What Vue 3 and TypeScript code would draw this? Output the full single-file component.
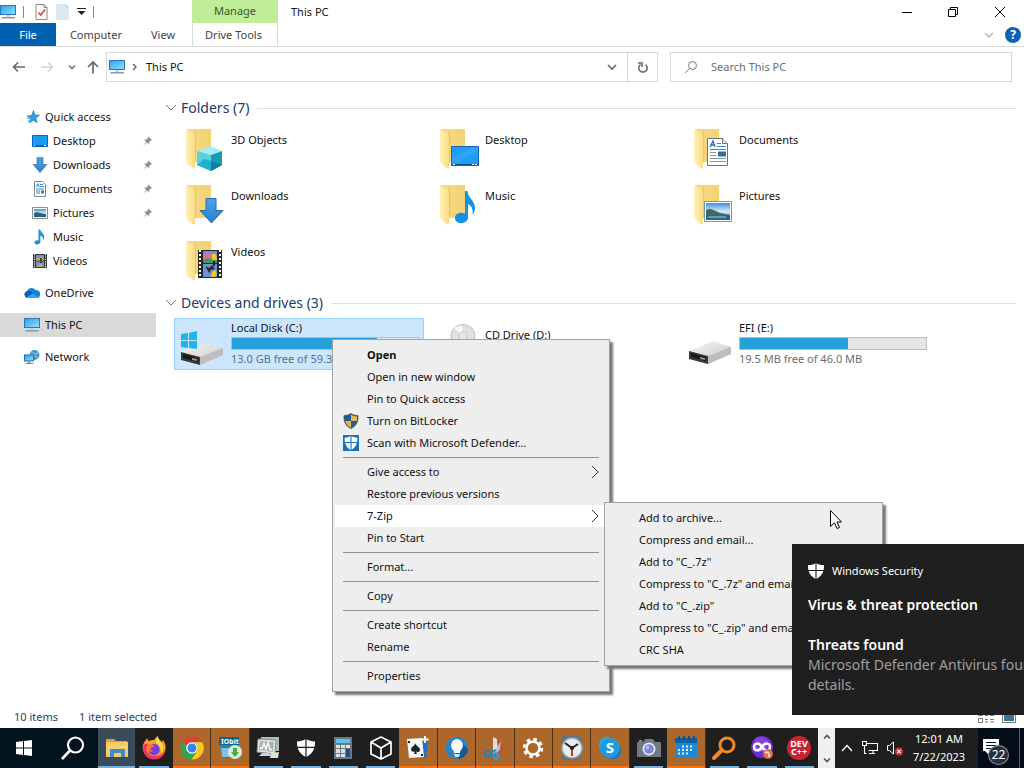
<script setup lang="ts">
import { ref } from 'vue'

interface NavItem { label: string; icon: string; child?: boolean; pinned?: boolean }
interface Drive { name: string; icon: string; used?: number; info?: string; selected?: boolean }
interface MenuEntry { label?: string; icon?: string; sub?: boolean; bold?: boolean; active?: boolean }
interface Mark { text: string; y: number; size: number }
interface TaskItem { label: string; icon: string; alert?: boolean; active?: boolean; marks?: Mark[] }

const search = ref('')

const navGroups: NavItem[][] = [
  [
    { label: 'Quick access', icon: 'star' },
    { label: 'Desktop', icon: 'desktop', child: true, pinned: true },
    { label: 'Downloads', icon: 'down', child: true, pinned: true },
    { label: 'Documents', icon: 'doc', child: true, pinned: true },
    { label: 'Pictures', icon: 'pic', child: true, pinned: true },
    { label: 'Music', icon: 'note', child: true },
    { label: 'Videos', icon: 'film', child: true },
  ],
  [{ label: 'OneDrive', icon: 'cloud' }],
  [{ label: 'This PC', icon: 'pc' }],
  [{ label: 'Network', icon: 'network' }],
]

const folders = [
  { name: '3D Objects', icon: 'f-3d' },
  { name: 'Desktop', icon: 'f-desktop' },
  { name: 'Documents', icon: 'f-doc' },
  { name: 'Downloads', icon: 'f-down' },
  { name: 'Music', icon: 'f-music' },
  { name: 'Pictures', icon: 'f-pic' },
  { name: 'Videos', icon: 'f-video' },
]

const drives: Drive[] = [
  { name: 'Local Disk (C:)', icon: 'drive-win', used: 78, info: '13.0 GB free of 59.3 GB', selected: true },
  { name: 'CD Drive (D:)', icon: 'cd' },
  { name: 'EFI (E:)', icon: 'drive', used: 58, info: '19.5 MB free of 46.0 MB' },
]

const menuGroups: MenuEntry[][] = [
  [
    { label: 'Open', bold: true },
    { label: 'Open in new window' },
    { label: 'Pin to Quick access' },
    { label: 'Turn on BitLocker', icon: 'uac' },
    { label: 'Scan with Microsoft Defender...', icon: 'defender' },
  ],
  [
    { label: 'Give access to', sub: true },
    { label: 'Restore previous versions' },
    { label: '7-Zip', sub: true, active: true },
    { label: 'Pin to Start' },
  ],
  [{ label: 'Format...' }],
  [{ label: 'Copy' }],
  [{ label: 'Create shortcut' }, { label: 'Rename' }],
  [{ label: 'Properties' }],
]

const subMenu = [
  'Add to archive...',
  'Compress and email...',
  'Add to "C_.7z"',
  'Compress to "C_.7z" and email',
  'Add to "C_.zip"',
  'Compress to "C_.zip" and email',
  'CRC SHA',
]

const tasks: TaskItem[] = [
  { label: 'File Explorer', icon: 't-explorer', active: true },
  { label: 'Firefox', icon: 't-firefox' },
  { label: 'Chrome', icon: 't-chrome', alert: true },
  { label: 'Uninstaller', icon: 't-iobit', alert: true, marks: [{ text: 'IObit', y: 8, size: 7 }] },
  { label: 'Performance', icon: 't-monitor' },
  { label: 'Security', icon: 'shield' },
  { label: 'Calculator', icon: 't-calc' },
  { label: '3D Viewer', icon: 't-cube' },
  { label: 'Solitaire', icon: 't-cards', alert: true },
  { label: 'Tips', icon: 't-bulb', alert: true },
  { label: 'Snipping Tool', icon: 't-snip', alert: true },
  { label: 'Settings', icon: 't-gear', alert: true },
  { label: 'Clock', icon: 't-clock', alert: true },
  { label: 'Skype', icon: 't-skype', alert: true, marks: [{ text: 'S', y: 17, size: 15 }] },
  { label: 'Camera', icon: 't-camera' },
  { label: 'Calendar', icon: 't-calendar', alert: true },
  { label: 'Everything', icon: 't-search' },
  { label: 'Mixed Reality', icon: 't-loop' },
  { label: 'Dev-C++', icon: 't-dev', marks: [{ text: 'DEV', y: 11, size: 9 }, { text: 'C++', y: 19, size: 9 }] },
]
</script>

<template>
  <div class="screen">
    <svg class="sprite" aria-hidden="true">
      <defs>
        <linearGradient id="gBlue" x1="0" y1="0" x2="1" y2="1"><stop offset="0" stop-color="#2fa4ec" /><stop offset="1" stop-color="#8fdcff" /></linearGradient>
        <linearGradient id="gFold" x1="0" y1="0" x2="1" y2="0"><stop offset="0" stop-color="#f8da85" /><stop offset="1" stop-color="#f2d272" /></linearGradient>
        <linearGradient id="gFlap" x1="0" y1="0" x2="1" y2="0"><stop offset="0" stop-color="#fff0b8" /><stop offset="1" stop-color="#fbdc83" /></linearGradient>
        <linearGradient id="gArrow" x1="0" y1="0" x2="0" y2="1"><stop offset="0" stop-color="#4ba4e8" /><stop offset="1" stop-color="#2a80cf" /></linearGradient>
        <linearGradient id="gSky" x1="0" y1="0" x2="0" y2="1"><stop offset="0" stop-color="#3f8fd8" /><stop offset="0.5" stop-color="#d4ecfa" /><stop offset="1" stop-color="#3c7baa" /></linearGradient>
        <linearGradient id="gDrive" x1="0" y1="0" x2="1" y2="1"><stop offset="0" stop-color="#f4f4f4" /><stop offset="1" stop-color="#c9c9c9" /></linearGradient>
      </defs>

      <symbol id="pc" viewBox="0 0 16 16">
        <path d="M0 1h16v10H0z" fill="#2878b4" /><path d="M1 2h14v8H1z" fill="url(#gBlue)" />
        <path d="M6 11h4v2H6z" fill="#c6d6e2" /><path d="M2 13h13v1.400H1z" fill="#7f9cb2" />
      </symbol>
      <symbol id="check" viewBox="0 0 12 16">
        <path d="M.5.5h8l3 3v12H.5z" fill="#fbfbfb" stroke="#8a8a8a" /><path d="M8.500.5v3h3" fill="none" stroke="#8a8a8a" />
        <path d="M3 8.500 5.200 11 9.500 5.500" fill="none" stroke="#e0523c" stroke-width="1.800" />
      </symbol>
      <symbol id="blank" viewBox="0 0 13 16"><path d="M0 0h10l3 3v13H0z" fill="#dce8f2" /><path d="M10 0v3h3" fill="none" stroke="#c4d2de" /></symbol>
      <symbol id="star" viewBox="0 0 16 16">
        <path d="M9.500 1.500 11 6l4.500.2-3.600 3 1.300 4.500-4-2.400L5.200 14l1.400-4.400L3 7l4.500-.5z" fill="#2f9de6" stroke="#1273b8" stroke-width=".6" />
        <path d="M3 9.500h4M3.500 12h2.500" stroke="#58b6f2" />
      </symbol>
      <symbol id="desktop" viewBox="0 0 16 16"><path d="M.5 2.500h15v11H.5z" fill="#1a9cf4" stroke="#0d68b4" /><path d="M1 12h14v1H1z" fill="#0a5ea8" /><path d="M2 12h1v1H2zM12 12h2v1h-2z" fill="#fff" /></symbol>
      <symbol id="down" viewBox="0 0 16 16"><path d="M5 .5h6v7h4L8 15.500 1 7.500h4z" fill="url(#gArrow)" stroke="#2b6ca8" stroke-width=".6" /></symbol>
      <symbol id="doc" viewBox="0 0 16 16">
        <path d="M2.500.5h8l3 3v12h-11z" fill="#fff" stroke="#7d8790" /><path d="m4.500 6 1.400-3.500L7.300 6M8 3.500h3M8 5.500h4M4 8h8M4 10h4M4 12h4" stroke="#3787c4" fill="none" /><path d="M9 9.500h3v3H9z" fill="#3a7fb8" />
      </symbol>
      <symbol id="pic" viewBox="0 0 16 16"><path d="M.5 2.500h15v11H.5z" fill="#fff" stroke="#848e98" /><path d="M2 4h12v8H2z" fill="url(#gSky)" /><path d="M2 8c4-2 6 1 12 1v3H2z" fill="#2d607c" /></symbol>
      <symbol id="note" viewBox="0 0 16 16"><path d="M6.500.5h1.700c.5 3.200 4.500 4 4 8-.2 1.500-.8 2.200-1.300 2.800.6-3-.9-4.300-2.500-4.800v6.200c0 3.300-6 3.700-6 .8 0-2 2.300-2.600 4.100-2z" fill="#1b92d8" /></symbol>
      <symbol id="film" viewBox="0 0 16 16">
        <path d="M1 1h14v14H1z" fill="#333" /><path d="M2.500 1v14M13.500 1v14" stroke="#fff" stroke-width="1.200" stroke-dasharray="1.200 1.200" />
        <path d="M4 2h8v5.500H4zM4 8.500h8V14H4z" fill="#6d91df" /><path d="M4 6c2-2 3-1 4-1l1-2 2 1v3.500H4zM5 14c1-3 3-2 3-3l2-1v4z" fill="#d6ae32" /><path d="M8 5h2v5H8z" fill="#444" />
      </symbol>
      <symbol id="cloud" viewBox="0 0 16 16"><path d="M3.500 13A3.500 3.500 0 0 1 3 6.200 4.800 4.800 0 0 1 11.500 5 4 4 0 0 1 16 10c0 2-1.400 3-3 3z" fill="#1a83d8" /><path d="M3.500 13A3.500 3.500 0 0 1 3 6.200 5 5 0 0 1 7 6l5 6.800z" fill="#0b5fb5" /><path d="m2 12.500 7-4 5.500 4c-.5.400-1 .5-1.500.5H3.500z" fill="#2ba6ee" /></symbol>
      <symbol id="network" viewBox="0 0 16 16"><circle cx="10.500" cy="6" r="5" fill="#4b94c6" /><path d="M7 3c3 0 2 2 4 2s2-2 4-1M6 6c4 0 5 1 8 3" stroke="#9ccfe8" fill="none" /><path d="M0 5.500h10v7H0z" fill="#246fa8" /><path d="M1 6.500h8v5H1z" fill="url(#gBlue)" /><path d="M4 12.500h2v1.500H4zM1.500 14h8v1h-8z" fill="#7291a8" /></symbol>
      <symbol id="pin" viewBox="0 0 12 12"><path d="m7 1 4 4-1.300.4-2 2-.2 2.300L5.200 7.500 1 11.500l3.600-4.800L2.300 4.500l2.500-.2 2-2z" fill="#8a9299" /></symbol>

      <symbol id="folder" viewBox="0 0 48 48">
        <path d="M9 5h24v31l-2 2H13z" fill="url(#gFold)" /><path d="M18 7v31l-2 2V9z" fill="#dfb957" opacity=".6" />
        <path d="M8 5.500 17 10v32c0 2-1 3-2 2.500L8 38z" fill="url(#gFlap)" />
      </symbol>
      <symbol id="f-3d" viewBox="0 0 48 48"><use href="#folder" width="48" height="48" />
        <path d="m19 27 13-5 12 5-11 4z" fill="#a4eef2" /><path d="m19 27 14 4v16l-14-6z" fill="#5ccfe2" /><path d="m33 31 11-4v14l-11 6z" fill="#169ab6" /><path d="m19 41 7-6 7 2v10z" fill="#1fb0ca" /><path d="m33 37 11 4-11 6z" fill="#0c7f9c" />
      </symbol>
      <symbol id="f-desktop" viewBox="0 0 48 48"><use href="#folder" width="48" height="48" />
        <path d="M19.500 22.500h27v19h-27z" fill="#1f9cf6" stroke="#0f64ad" /><path d="M20 40h26v1H20z" fill="#0a5290" /><path d="M21 40h2v1h-2zM40 40h2v1h-2zM43 40h2v1h-2z" fill="#fff" /><path d="m20 34 22-11h4v4L22 40h-2z" fill="#42b2ff" opacity=".45" />
      </symbol>
      <symbol id="f-doc" viewBox="0 0 48 48"><use href="#folder" width="48" height="48" />
        <path d="M21.500 14.500h15l5 5v22h-20z" fill="#fff" stroke="#6d7680" /><path d="M36.500 14.500v5h5" fill="#dde3e8" stroke="#6d7680" />
        <path d="m24 23 3-6 2 6M25 21h4" fill="none" stroke="#2271b8" stroke-width="1.300" /><path d="M31 19.500h4M31 22.500h9M24 25.500h16" stroke="#2d8ac6" /><path d="M24 28.500h6M24 31.500h6M24 34.500h16M24 37.500h16" stroke="#88949e" /><path d="M32 27.500h8v5h-8z" fill="#2a6fa6" />
      </symbol>
      <symbol id="f-down" viewBox="0 0 48 48"><use href="#folder" width="48" height="48" />
        <path d="M28 18.500h10v12h7L33.500 43 22 30.500h6z" fill="url(#gArrow)" stroke="#2b6ca8" />
      </symbol>
      <symbol id="f-music" viewBox="0 0 48 48"><use href="#folder" width="48" height="48" />
        <path d="M33 11h2.500c0 7 7.500 9 7.500 17 0 4-1.500 5-2.500 7 1-6-1-9-4.500-11v13c0 8-13 8-13 1 0-5 6-6 10-4.500z" fill="#1492e2" />
      </symbol>
      <symbol id="f-pic" viewBox="0 0 48 48"><use href="#folder" width="48" height="48" />
        <path d="M18.500 21.500h27v20h-27z" fill="#fff" stroke="#7c93a8" /><path d="M20 23h24v17H20z" fill="url(#gSky)" /><path d="M20 30c5-3 9 1 14 3l10 2v2H20z" fill="#3b6d5c" /><path d="M20 35h24v5H20z" fill="#2d638f" /><path d="M22 37h18" stroke="#a9c9dc" />
      </symbol>
      <symbol id="f-video" viewBox="0 0 48 48"><use href="#folder" width="48" height="48" />
        <path d="M20 14h24v28H20z" fill="#262626" /><path d="M22 14v28M42 14v28" stroke="#fff" stroke-width="2" stroke-dasharray="2 2" />
        <path d="M25 15h14v12H25zM25 28h14v13H25z" fill="#6b90de" /><path d="M25 18h7l5-2 2 5-4 5H25z" fill="#dc6f9b" /><path d="M25 24c4-3 6 0 9-2l5 2v3H25z" fill="#449a53" />
        <path d="M34 18h4l1 6h-5zM34 36l3-2 2 4-2 3h-4z" fill="#f0c62b" /><path d="m27 30 4 2 3-3 3 4-4 1-2 3z" fill="#342b20" /><path d="M35 25h2v5h-2z" fill="#222" />
      </symbol>

      <symbol id="drive" viewBox="0 0 48 48">
        <g transform="translate(0 4)">
          <path d="m3 28 22-9q2-.6 4 0l16 5v7L22 41 3 36z" fill="url(#gDrive)" /><path d="m3 28 19 5v8L3 36z" fill="#3a3a3a" /><path d="m5 30 15 4v4L5 34z" fill="#191919" /><path d="m14 34 5 1v2l-5-1z" fill="#8d9b87" /><path d="m22 33 23-9v7L22 41z" fill="#bdbdbd" />
        </g>
      </symbol>
      <symbol id="drive-win" viewBox="0 0 48 48"><use href="#drive" y="1" width="48" height="48" />
        <path d="m3 15 7-1v7H3zM11 14l8-2v9h-8zM3 22h7v7l-7-1zM11 22h8v8l-8-1z" fill="#1eb4ee" />
      </symbol>
      <symbol id="cd" viewBox="0 0 48 48"><ellipse cx="31" cy="17" rx="12" ry="11.500" fill="#dfe1e3" stroke="#bcc0c4" /><path d="m31 17-9-8 8-3zM31 17l10 6-7 5z" fill="#f8f8f8" /><circle cx="31" cy="17" r="4" fill="#f4f4f4" stroke="#bdc1c4" /><circle cx="31" cy="17" r="1.500" fill="#fff" stroke="#aaa" stroke-width=".5" /></symbol>

      <symbol id="uac" viewBox="0 0 16 16"><path d="M8 .5C10 2 12.500 2.500 15 2.500c.5 6-2 11-7 13-5-2-7.500-7-7-13C3.500 2.500 6 2 8 .5z" fill="#25598f" /><path d="M8 1.500v6.500H2.300C1.900 6.500 1.800 5 1.900 3.500 4.500 3.300 6.500 2.800 8 1.500z" fill="#25598f" /><path d="M8 1.500c1.500 1.300 3.500 1.800 6.100 2 .1 1.500 0 3-.4 4.500H8zM8 8v6.700C5 13.500 3.200 11 2.300 8z" fill="#e4b94c" /><path d="M8 .5C10 2 12.500 2.500 15 2.500c.5 6-2 11-7 13-5-2-7.500-7-7-13C3.500 2.500 6 2 8 .5z" fill="none" stroke="#4c5358" stroke-width=".8" /></symbol>
      <symbol id="defender" viewBox="0 0 16 16"><path d="M0 0h16v16H0z" fill="#1873bd" /><path d="M8 1c2 1.200 4 1.600 6.300 1.700C14.700 8.200 12.500 13 8 15 3.500 13 1.300 8.200 1.700 2.700 4 2.600 6 2.200 8 1z" fill="#fff" /><path d="M8 1v14M1 7.500h14" stroke="#1873bd" stroke-width="1.100" /></symbol>
      <symbol id="shield" viewBox="0 0 16 16"><path d="M8 0c2.300 1.500 5 2.200 8 2.200C16.300 8.500 13.500 13.800 8 16 2.500 13.800-.3 8.500 0 2.200 3 2.200 5.700 1.500 8 0z" fill="#fff" /><path d="M8 0v16M0 7.500h16" stroke="#1f1f1f" stroke-width="1.100" /></symbol>

      <symbol id="t-explorer" viewBox="0 0 24 24"><path d="M1 3h8l2 2h11v6H1z" fill="#dfa132" /><path d="M1 6h22v15H1z" fill="#f8ca63" /><path d="M5 13h15v8h-4v-4H9v4H5z" fill="#3b8fce" /><path d="M1 10h22v2H1z" fill="#fbdc8e" opacity=".5" /></symbol>
      <symbol id="t-firefox" viewBox="0 0 24 24">
        <path d="M5 2c1 2 1 3 2 3 2-1 3-1 5-1 1-1 2-3 4-4 0 3 2 4 4 6l1-2c2 3 3 6 2.500 9A11.500 11.500 0 0 1 1 14C0 9 2 7 3 5c1-1 2-2 2-3z" fill="#ff9a24" /><path d="M1 12c0 6 4 11.500 11 11.500 6 0 10-3 11.500-9C20 20 10 22 6 17c-2-3-2-6 0-9-2-1-5 0-5 4z" fill="#f3335f" /><circle cx="12" cy="13.500" r="5.700" fill="#763ce0" /><path d="M6 8c3 0 4 1 6 1 1 1-1 2-3 3-1 2 1 3 3 3-3 2-7 0-7-3z" fill="#ff7526" /><path d="M16 0c-1 4 4 5 5 10 1 4-1 6-2 7 1-5-3-9-5-10 0-4 1-6 2-7z" fill="#ffdf43" />
      </symbol>
      <symbol id="t-chrome" viewBox="0 0 24 24"><circle cx="12" cy="12" r="11.500" fill="#31a552" /><path d="M2 6A11.500 11.500 0 0 1 22 6H12a6 6 0 0 0-5.200 3z" fill="#e53f33" /><path d="M2 6 7 15l5 3-4 5.500" fill="#31a552" /><path d="M12 6h10a11.500 11.500 0 0 1-10.500 17.500L17.200 15A6 6 0 0 0 12 6z" fill="#fcc81e" /><circle cx="12" cy="12" r="5.800" fill="#fff" /><circle cx="12" cy="12" r="4.500" fill="#3c80e8" /></symbol>
      <symbol id="t-iobit" viewBox="0 0 24 24"><path d="M1 1h20v21H4z" fill="#1d83b3" /><path d="M1 1h20v8H1z" fill="#116489" /><path d="M3 12h13v9H4z" fill="#79c5df" /><circle cx="17" cy="16" r="7" fill="#dce9dd" /><path d="M15 12h4v4h2l-4 5-4-5h2z" fill="#46af38" /></symbol>
      <symbol id="t-monitor" viewBox="0 0 24 24"><path d="M5 1h18v14H5z" fill="#aebbb7" /><path d="m2 3 18 1-1 14-18-2z" fill="#e2e8e4" stroke="#86928f" /><path d="m4 5 14 1-1 10-14-2z" fill="#a8b4ae" /><path d="m4 12 2 .5 2-5 2 6 2-7 2 7 2 .5" fill="none" stroke="#fff" stroke-width="1.300" /><path d="M3 20h13l-3-3H6z" fill="#ccd3d2" /><path d="m15 17 8-1-1 6h-8z" fill="#dce0df" /></symbol>
      <symbol id="t-calc" viewBox="0 0 24 24"><path d="M3 1h18v22H3z" fill="#6d7881" /><path d="M5 3h14v4H5z" fill="#5bc4f4" /><path d="M5 9h4v3H5zM10 9h4v3h-4zM15 9h4v3h-4zM5 13h4v4H5zM10 13h4v4h-4zM5 18h4v3H5zM10 18h4v3h-4z" fill="#dce2e6" /><path d="M15 13h4v8h-4z" fill="#1d4e83" /></symbol>
      <symbol id="t-cube" viewBox="0 0 24 24"><path d="m12 1 10 5v12l-10 5-10-5V6zM2 6l10 6 10-6M12 12v11" fill="none" stroke="#fff" stroke-width="1.700" stroke-linejoin="round" /></symbol>
      <symbol id="t-cards" viewBox="0 0 24 24"><path d="m14 4 8 1-2 17-9-1z" fill="#1a73cb" /><path d="m1 3 15-1 2 19-15 1z" fill="#f7faf9" /><path d="M9 7c1 3 5 4 5 7 0 2-3 3-4 1l1 3H8l1-3c-2 2-4 0-4-2 1-3 4-3 4-6z" fill="#18222e" /><path d="M2 5h2v2H2zM15 18h2v2h-2z" fill="#222" /><path d="M19 0v7M15.500 3.500h7" stroke="#fff" stroke-width="2" /></symbol>
      <symbol id="t-bulb" viewBox="0 0 24 24"><circle cx="12" cy="12" r="11" fill="#2487ce" /><path d="m17 7 6 6c0 5-4 9-9 10l-4-4z" fill="#105a9a" /><path d="M12 3a6.500 6.500 0 0 0-4 11c1 1 1 2 1 3h6c0-1 0-2 1-3a6.500 6.500 0 0 0-4-11z" fill="#fff" /><path d="M9 18h6l-1 3h-4z" fill="#cde9f7" /></symbol>
      <symbol id="t-snip" viewBox="0 0 24 24"><path d="M10 4a7 7 0 1 1 2 14" fill="none" stroke="#d53f2f" stroke-width="3" /><path d="m10 1 4 2 1 16-5-2z" fill="#dce0e1" /><path d="m13 13 5-8-1 9-4 3z" fill="#b8c4cc" /><circle cx="5" cy="18" r="3" fill="none" stroke="#217fbd" stroke-width="2" /><ellipse cx="13" cy="20" rx="2.500" ry="3" fill="none" stroke="#289fdc" stroke-width="2" /><path d="m7 17 6-3" stroke="#278bc7" stroke-width="2" /></symbol>
      <symbol id="t-gear" viewBox="0 0 24 24"><circle cx="12" cy="12" r="8.500" fill="none" stroke="#fff" stroke-width="3.500" stroke-dasharray="3.500 3.175" /><circle cx="12" cy="12" r="6.500" fill="none" stroke="#fff" stroke-width="2.500" /></symbol>
      <symbol id="t-clock" viewBox="0 0 24 24"><path d="M1 3a4 4 0 0 1 4-3h15l3 6-1 14-4 4H4l-3-5z" fill="#65717b" /><circle cx="12" cy="12" r="10" fill="#e9edef" stroke="#9dabb3" stroke-width="1.500" /><path d="m5 7 7 5 6-4" fill="none" stroke="#222" stroke-width="2" /><path d="M12 11v9" stroke="#d12e2e" stroke-width="2" /><circle cx="12" cy="12" r="2" fill="#222" /></symbol>
      <symbol id="t-skype" viewBox="0 0 24 24"><circle cx="9" cy="9" r="8" fill="#27aee8" /><circle cx="15" cy="15" r="8" fill="#1177c2" /><circle cx="12" cy="12" r="10" fill="#1b9cde" /></symbol>
      <symbol id="t-camera" viewBox="0 0 24 24"><path d="M0 6h6l2-3h8l2 3h6v15H0z" fill="#6f7a82" /><path d="M2 4h3v2H2z" fill="#849099" /><circle cx="12" cy="13" r="6.500" fill="#e9ecef" /><circle cx="12" cy="13" r="4.800" fill="#8583dc" /><circle cx="10.500" cy="11.500" r="1.700" fill="#b9bdf7" /></symbol>
      <symbol id="t-calendar" viewBox="0 0 24 24"><path d="M1 2h22v20H1z" fill="#1d89d3" /><path d="M1 2h22v5H1z" fill="#105fa6" /><path d="M5 0v4M10 0v4M15 0v4M20 0v4" stroke="#0a4984" stroke-width="1.500" /><path d="M8 10.500h12M4 14h16M4 17.500h12" stroke="#e7f6ff" stroke-width="2" stroke-dasharray="2 2" /></symbol>
      <symbol id="t-search" viewBox="0 0 24 24"><circle cx="15" cy="9" r="7" fill="none" stroke="#f18920" stroke-width="3" /><path d="m10 14-8 8" stroke="#f18920" stroke-width="4" stroke-linecap="round" /></symbol>
      <symbol id="t-loop" viewBox="0 0 24 24"><circle cx="12" cy="11" r="11" fill="#6d2ccc" /><path d="M5 3c5-4 12-1 14 3l-4 11-11-4z" fill="#8940e1" /><path d="M12 11C9 6 4 7 4 11s5 5 8 0c3-5 8-4 8 0s-5 5-8 0z" fill="none" stroke="#fff" stroke-width="2.500" /><circle cx="18" cy="18" r="5" fill="#e16b56" /><path d="M15 17c3-2 5 1 4 4" fill="none" stroke="#ffd3ad" stroke-width="2" /></symbol>
      <symbol id="t-dev" viewBox="0 0 24 24"><circle cx="12" cy="12" r="12" fill="#c82431" /></symbol>
    </svg>

    <header>
      <div class="titlebar">
        <div class="quick">
          <svg class="i16"><use href="#pc" /></svg>
          <i class="bar"></i>
          <svg class="qa"><use href="#check" /></svg>
          <svg class="qa"><use href="#blank" /></svg>
          <svg class="caret" viewBox="0 0 9 7"><path d="M0 .5h9" stroke="#222" /><path d="M.5 3h8l-4 4z" fill="#222" /></svg>
          <i class="bar"></i>
        </div>
        <div class="manage">Manage</div>
        <h1>This PC</h1>
        <div class="winbtns">
          <button aria-label="Minimize"><svg viewBox="0 0 12 12"><path d="M1 6.500h10" stroke="#000" /></svg></button>
          <button aria-label="Restore"><svg viewBox="0 0 12 12"><path d="M1.500 3.500h7v7h-7zM3.500 3.500v-2h7v7h-2" fill="none" stroke="#000" /></svg></button>
          <button aria-label="Close"><svg viewBox="0 0 12 12"><path d="m1 1 10 10M11 1 1 11" stroke="#000" /></svg></button>
        </div>
      </div>
      <nav class="tabs" aria-label="Ribbon">
        <button class="file">File</button>
        <button class="tab-computer">Computer</button>
        <button class="tab-view">View</button>
        <button class="tools">Drive Tools</button>
        <span class="grow"></span>
        <button class="expand" aria-label="Expand ribbon"><svg viewBox="0 0 10 10"><path d="m1 3 4 4 4-4" fill="none" stroke="#b8b8b8" stroke-width="1.500" /></svg></button>
        <button class="help" aria-label="Help">?</button>
      </nav>
    </header>

    <div class="address-row">
      <button class="nav-btn" aria-label="Back"><svg viewBox="0 0 14 14"><path d="M1.500 7H13M6 2.500 1.500 7 6 11.500" fill="none" stroke="#666" stroke-width="1.600" /></svg></button>
      <button class="nav-btn" aria-label="Forward"><svg viewBox="0 0 14 14"><path d="M1 7h11.500M8 2.500 12.500 7 8 11.500" fill="none" stroke="#d2d2d2" stroke-width="1.500" /></svg></button>
      <button class="nav-btn small" aria-label="Recent"><svg viewBox="0 0 14 14"><path d="m4 5.500 3 3 3-3" fill="none" stroke="#777" stroke-width="1.600" /></svg></button>
      <button class="nav-btn up" aria-label="Up"><svg viewBox="0 0 14 14"><path d="M7 13.500V2M2 7l5-5 5 5" fill="none" stroke="#666" stroke-width="1.700" /></svg></button>
      <div class="address">
        <svg class="i16"><use href="#pc" /></svg>
        <svg class="crumb" viewBox="0 0 6 8"><path d="m1 1 3 3-3 3" fill="none" stroke="#666" stroke-width="1.400" /></svg>
        <span class="grow">This PC</span>
        <button aria-label="Address history"><svg viewBox="0 0 14 14"><path d="m3 5 4 4 4-4" fill="none" stroke="#666" stroke-width="1.700" /></svg></button>
        <button class="refresh" aria-label="Refresh"><svg viewBox="0 0 14 14"><path d="M9.500 4.500a4.200 4.200 0 1 1-5 0M2 3h4v4" fill="none" stroke="#666" stroke-width="1.500" /></svg></button>
      </div>
      <label class="search">
        <svg viewBox="0 0 14 14"><circle cx="8.500" cy="5.500" r="4" fill="none" stroke="#777" /><path d="m5.500 8.500-4.500 4.500" stroke="#777" /></svg>
        <input v-model="search" type="text" placeholder="Search This PC" aria-label="Search This PC" />
      </label>
    </div>

    <div class="body">
      <nav class="side" aria-label="Locations">
        <div v-for="(group, g) in navGroups" :key="g" class="group">
          <a v-for="n in group" :key="n.label" href="#" :class="{ child: n.child, current: n.label === 'This PC' }">
            <svg class="i16"><use :href="'#' + n.icon" /></svg>
            <span class="grow">{{ n.label }}</span>
            <svg v-if="n.pinned" class="pin"><use href="#pin" /></svg>
          </a>
        </div>
      </nav>

      <main>
        <h2><svg viewBox="0 0 12 8"><path d="m1 1 5 5 5-5" fill="none" stroke="#777" /></svg>Folders (7)<i></i></h2>
        <div class="tiles">
          <button v-for="f in folders" :key="f.name" class="tile one">
            <svg class="i48"><use :href="'#' + f.icon" /></svg>
            <span class="info">{{ f.name }}</span>
          </button>
        </div>
        <h2><svg viewBox="0 0 12 8"><path d="m1 1 5 5 5-5" fill="none" stroke="#777" /></svg>Devices and drives (3)<i></i></h2>
        <div class="tiles">
          <button v-for="d in drives" :key="d.name" class="tile" :class="{ one: !d.info, selected: d.selected }">
            <svg class="i48"><use :href="'#' + d.icon" /></svg>
            <span class="info">
              <span>{{ d.name }}</span>
              <span v-if="d.info" class="meter"><i :style="{ width: d.used + '%' }"></i></span>
              <span v-if="d.info" class="free">{{ d.info }}</span>
            </span>
          </button>
        </div>
      </main>
    </div>

    <footer class="status">
      <span>10 items</span><span>1 item selected</span>
      <span class="grow"></span>
      <svg class="view" viewBox="0 0 16 12"><path d="M.5.5h4v4h-4zM.5 7.500h4v4h-4zM7 1.500h3M12 1.500h4M7 4.500h3M12 4.500h4M7 8.500h3M12 8.500h4M7 11h3M12 11h4" fill="none" stroke="#777" /></svg>
      <svg class="view" viewBox="0 0 16 12"><path d="M1.500.5h13v11h-13z" fill="#fff" stroke="#777" /><path d="M3 2h10v8H3z" fill="#3c7595" /></svg>
    </footer>

    <footer class="taskbar">
      <button class="start" aria-label="Start"><svg viewBox="0 0 16 16"><path d="m0 2 7-1v6.500H0zM8 1l8-1v7.500H8zM0 8.500h7V15l-7-1zM8 8.500h8V16l-8-1z" fill="#fff" /></svg></button>
      <button class="find" aria-label="Search"><svg viewBox="0 0 24 24"><circle cx="14.500" cy="9" r="7.500" fill="none" stroke="#fff" stroke-width="2.200" /><path d="m9 14.500-8 8.500" stroke="#fff" stroke-width="2.600" /></svg></button>
      <div class="apps">
        <button v-for="t in tasks" :key="t.label" :aria-label="t.label" :class="{ alert: t.alert, active: t.active }">
          <svg :class="t.icon === 'shield' ? 'i18' : 'i24'">
            <use :href="'#' + t.icon" />
            <text v-for="m in t.marks" :key="m.text" x="12" :y="m.y" :font-size="m.size" text-anchor="middle" font-weight="700" fill="#fff">{{ m.text }}</text>
          </svg>
        </button>
      </div>
      <div class="scroller">
        <button aria-label="Scroll up"><svg viewBox="0 0 8 8"><path d="m1 5.500 3-3 3 3" fill="none" stroke="#555" stroke-width="1.600" /></svg></button>
        <button aria-label="Scroll down"><svg viewBox="0 0 8 8"><path d="m1 2.500 3 3 3-3" fill="none" stroke="#555" stroke-width="1.600" /></svg></button>
      </div>
      <div class="tray">
        <svg class="t-up" viewBox="0 0 12 8"><path d="m1 7 5-5.500L11 7" fill="none" stroke="#fff" stroke-width="1.300" /></svg>
        <svg class="t-icon" viewBox="0 0 16 16"><path d="M4.500 3.500h11v7h-9M11 10.500v3M7 13.500h6M.5 1.500h4v4h-4zM2.500 5.500v8h2" fill="none" stroke="#fff" stroke-width="1.100" /></svg>
        <svg class="t-icon" viewBox="0 0 16 16"><path d="M.5 5.500h2L6.500 2v12L2.500 10.500h-2z" fill="none" stroke="#fff" /><circle cx="12" cy="11.500" r="4" fill="#ce303c" /><path d="m10.300 9.800 3.400 3.400M13.700 9.800l-3.400 3.400" stroke="#fff" stroke-width="1.200" /></svg>
        <time>12:01 AM<br />7/22/2023</time>
      </div>
      <button class="notify" aria-label="22 notifications">
        <svg viewBox="0 0 18 16"><path d="M1 0h16v12H7v4l-4-4H1z" fill="#fff" /><path d="M4 3.500h10M4 6.500h10M4 9.500h6" stroke="#05101c" stroke-width="1.200" /></svg>
        <b>22</b>
      </button>
    </footer>

    <div class="menu context" role="menu">
      <div v-for="(group, g) in menuGroups" :key="g" class="mgroup">
        <button v-for="m in group" :key="m.label" role="menuitem" :class="{ strong: m.bold, active: m.active }">
          <span class="slot"><svg v-if="m.icon" class="i16"><use :href="'#' + m.icon" /></svg></span>
          <span class="grow">{{ m.label }}</span>
          <svg v-if="m.sub" class="arrow" viewBox="0 0 8 14"><path d="m1 1 6 6-6 6" fill="none" stroke="#333" /></svg>
        </button>
      </div>
    </div>

    <div class="menu submenu" role="menu">
      <button v-for="s in subMenu" :key="s" role="menuitem"><span class="slot"></span>{{ s }}</button>
    </div>

    <svg class="cursor" viewBox="0 0 12 19"><path d="M.5.5v16l4-3.700 2.500 5.700 2.500-1-2.500-5.500h4.500z" fill="#fff" stroke="#000" /></svg>

    <aside class="toast">
      <div class="source"><svg class="i16"><use href="#shield" /></svg>Windows Security</div>
      <h3>Virus &amp; threat protection</h3>
      <h4>Threats found</h4>
      <p>Microsoft Defender Antivirus found<br />details.</p>
    </aside>
  </div>
</template>

<style>
body { margin: 0; }
</style>

<style scoped>
* { box-sizing: border-box; }
.screen { position: relative; display: flex; flex-direction: column; min-height: 100vh; overflow: hidden; background: #fff; color: #111; font: 11px/16px "Noto Sans", "Open Sans", sans-serif; }
.sprite { position: absolute; width: 0; height: 0; }
button { margin: 0; padding: 0; border: 0; background: none; color: inherit; font: inherit; text-align: left; }
svg { display: block; flex: none; }
.i16 { width: 16px; height: 16px; }
.i18 { width: 18px; height: 18px; }
.i24 { width: 24px; height: 24px; }
.i48 { width: 48px; height: 48px; }
.grow { flex: 1; }

.titlebar { display: flex; height: 23px; align-items: center; }
.quick { display: flex; align-items: center; width: 192px; }
.bar { width: 1px; height: 12px; margin: 0 11px 0 7px; background: #888; }
.qa { width: 13px; height: 16px; margin-right: 8px; }
.caret { width: 9px; height: 7px; }
.manage { width: 86px; height: 23px; background: #bfed98; color: #3b5929; text-align: center; line-height: 21px; }
h1 { flex: 1; margin: 0 0 0 13px; font-size: 11px; font-weight: 400; line-height: 23px; }
.winbtns { display: flex; }
.winbtns button { display: flex; width: 46px; height: 20px; align-items: center; justify-content: center; }
.winbtns button:last-child { width: 48px; }
.winbtns svg { width: 12px; height: 12px; }
.tabs { display: flex; height: 24px; align-items: stretch; border-bottom: 1px solid #dadada; color: #444; }
.tabs button { text-align: center; }
.file { width: 56px; background: #0061b0; color: #fff; }
.tab-computer { width: 80px; }
.tab-view { width: 56px; padding-right: 2px; }
.tabs .tools { width: 86px; padding-right: 3px; border: solid #dadada; border-width: 0 1px; }
.expand { width: 20px; }
.expand svg { width: 10px; height: 10px; }
.tabs .help { align-self: center; width: 16px; height: 16px; margin: 0 3px 0 1px; border-radius: 50%; background: #0a63b5; color: #fff; font-size: 12px; font-weight: 700; line-height: 16px; }

.address-row { display: flex; height: 40px; padding: 0 12px 0 6px; align-items: center; }
.nav-btn { width: 28px; }
.nav-btn svg { width: 14px; height: 14px; margin-left: 6px; }
.nav-btn.small { width: 22px; }
.nav-btn.small svg { margin-left: 3px; }
.nav-btn.up { width: 22px; }
.nav-btn.up svg { margin-left: 2px; }
.address { display: flex; flex: 1 1 552px; height: 30px; align-items: center; border: 1px solid #d9d9d9; padding-left: 2px; }
.crumb { width: 6px; height: 8px; margin: 0 8px 0 7px; }
.address button { display: flex; width: 30px; height: 28px; align-items: center; justify-content: center; }
.address button svg { width: 14px; height: 14px; }
.address .refresh { border-left: 1px solid #d9d9d9; }
.search { display: flex; flex: 1 1 342px; height: 30px; margin-left: 12px; padding-left: 13px; align-items: center; border: 1px solid #d9d9d9; }
.search svg { width: 14px; height: 14px; margin-right: 13px; }
.search input { flex: 1; min-width: 0; padding: 0; border: 0; outline: 0; background: none; color: #555; font: inherit; }
.search input::placeholder { color: #6d6d6d; opacity: 1; }

.body { display: flex; flex: 1; }
.side { width: 156px; padding-top: 18px; }
.group { margin-bottom: 8px; }
.side a { display: flex; height: 24px; padding: 0 3px 0 24px; align-items: center; gap: 5px; color: #111; text-decoration: none; }
.side a.child { padding-left: 32px; }
.side a.current { background: #d9d9d9; }
.pin { width: 11px; height: 12px; }
main { flex: 1; padding: 10px 8px 0 9px; }
h2 { display: flex; margin: 0; height: 22px; align-items: center; gap: 4px; color: #23386b; font-size: 14px; font-weight: 400; }
h2 svg { width: 12px; height: 8px; }
h2 i { flex: 1; height: 1px; margin-left: 4px; background: #e0e0e0; }
.tiles { display: grid; grid-template-columns: repeat(auto-fill, 250px); gap: 4px; padding: 4px 0 5px 9px; }
.tile { display: flex; height: 52px; padding: 0 4px 0 3px; align-items: flex-start; gap: 5px; border: 1px solid transparent; }
.tile.selected { border-color: #99cff8; background: #cce6fd; }
.info { display: flex; flex: 1; flex-direction: column; padding-top: 1px; }
.tile.one .info { padding-top: 8px; }
.meter { display: block; height: 13px; margin: 1px 0; border: 1px solid #bcbcbc; background: #e6e6e6; }
.meter i { display: block; height: 11px; background: #26a0da; }
.free { color: #6d6d6d; }
.selected .free { color: #56718c; }

.status { display: flex; height: 22px; padding: 0 7px 0 14px; align-items: center; color: #2d4258; }
.status span { margin-right: 21px; }
.status .view { width: 16px; height: 12px; margin-left: 7px; }

.taskbar { display: flex; height: 40px; background: #1f1f1f; color: #fff; }
.start, .find { display: flex; width: 48px; align-items: center; justify-content: center; background: #03141f; }
.start svg { width: 16px; height: 16px; }
.find { width: 50px; }
.find svg { width: 24px; height: 24px; }
.apps { display: flex; flex: 1; }
.apps button { position: relative; display: flex; flex: 1; align-items: center; justify-content: center; }
.apps button::after { position: absolute; right: 4px; bottom: 0; left: 4px; height: 2px; background: #76b2e0; content: ""; }
.apps .active { background: #3b4c59; }
.apps .alert { border-right: 1px solid #4a2d16; background: #ac672a; }
.apps .alert::after { right: 0; left: 0; background: #ff7410; }
.apps .active::after { right: 0; left: 0; }
.scroller { display: flex; width: 17px; flex-direction: column; justify-content: space-between; padding: 5px 0 4px; background: #f0f0f0; }
.scroller svg { width: 8px; height: 8px; margin: 0 auto; }
.tray { display: flex; width: 143px; padding: 0 12px 0 6px; align-items: center; gap: 9px; }
.t-up { width: 12px; height: 8px; }
.t-icon { width: 16px; height: 16px; }
time { flex: 1; text-align: center; line-height: 18px; white-space: nowrap; }
.notify { position: relative; width: 46px; background: #020d19; }
.notify::after { position: absolute; top: 0; right: 4px; bottom: 0; width: 1px; background: #536170; content: ""; }
.notify svg { width: 18px; height: 16px; margin: 0 0 3px 4px; }
.notify b { position: absolute; top: 17px; left: 10px; width: 21px; height: 20px; border: 1px solid #8a929a; border-radius: 50%; background: #26313b; font-size: 12px; font-weight: 400; line-height: 18px; text-align: center; }

.menu { position: absolute; border: 1px solid #a2a2a2; background: #eee; box-shadow: 3px 3px 2px #777; }
.menu button { display: flex; width: 100%; height: 22px; align-items: center; }
.context { top: 339px; left: 332px; width: 278px; padding: 4px 2px; }
.mgroup + .mgroup::before { display: block; height: 1px; margin: 3px 8px; background: #909090; content: ""; }
.menu button.active { background: #fff; }
.strong { font-weight: 700; }
.slot { width: 32px; padding-left: 8px; }
.arrow { width: 8px; height: 14px; margin-right: 8px; }
.submenu { top: 502px; left: 604px; width: 279px; padding: 4px 2px; }
.cursor { position: absolute; top: 510px; left: 830px; width: 12px; height: 19px; }

.toast { position: absolute; right: 0; bottom: 53px; width: 232px; height: 171px; padding: 17px 0 0 16px; overflow: hidden; background: #1f1f1f; color: #fff; font-size: 14px; line-height: 20px; white-space: nowrap; }
.source { display: flex; height: 20px; align-items: center; gap: 8px; font-size: 11px; }
.toast h3, .toast h4, .toast p { margin: 0; font-size: 14px; }
.toast h3 { margin-top: 14px; font-weight: 600; }
.toast h4 { margin-top: 20px; font-weight: 600; }
.toast p { color: #a0a0a0; }
</style>
